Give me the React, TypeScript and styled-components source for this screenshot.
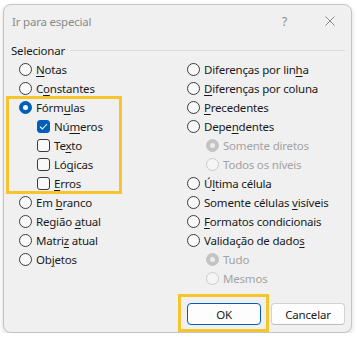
import React from 'react';
import styled, { createGlobalStyle } from 'styled-components';

const Global = createGlobalStyle`
  html, body { margin: 0; padding: 0; background: #ffffff; }
  body {
    font-family: "Noto Sans", "Segoe UI", sans-serif;
    font-size: 11.5px;
    letter-spacing: -0.2px;
    color: #1a1a1a;
  }
`;

const Dialog = styled.div`
  box-sizing: border-box;
  margin: 4px 0 0 3px;
  width: 349px;
  height: 329px;
  background: #f0f0f0;
  border: 1px solid #c4c4c4;
  border-radius: 8px;
  box-shadow: 0 2px 5px rgba(0, 0, 0, 0.16);
  display: flex;
  flex-direction: column;
`;

const TitleBar = styled.div`
  height: 32px;
  display: flex;
  align-items: center;
  padding: 0 16px 0 8px;
`;

const Title = styled.div`
  flex: 1;
  color: #8a8a8a;
  font-size: 11.5px;
`;

const Help = styled.span`
  color: #8a8a8a;
  font-size: 12px;
  margin-right: 38px;
`;

const Content = styled.div`
  padding: 4px 6px 0 7px;
`;

const GroupHeader = styled.div`
  height: 19px;
  display: flex;
  align-items: center;
  gap: 5px;
  &::after {
    content: "";
    flex: 1;
    height: 1px;
    background: #dcdcdc;
  }
`;

const Columns = styled.div`
  display: grid;
  grid-template-columns: 168px 1fr;
  margin-left: 8px;
`;

const Column = styled.div`
  display: flex;
  flex-direction: column;
`;

const Row = styled.label<{ $indent?: number; $disabled?: boolean }>`
  height: 19px;
  display: flex;
  align-items: center;
  gap: 4px;
  padding-left: ${(p) => p.$indent ?? 0}px;
  color: ${(p) => (p.$disabled ? '#a3a3a3' : '#1a1a1a')};
  white-space: nowrap;
  u { text-decoration-thickness: 1px; text-underline-offset: 2px; }
`;

const Radio = styled.span<{ $checked?: boolean; $disabled?: boolean }>`
  box-sizing: border-box;
  width: 13px;
  height: 13px;
  flex: none;
  border-radius: 50%;
  display: flex;
  align-items: center;
  justify-content: center;
  border: 1px solid
    ${(p) => (p.$checked ? (p.$disabled ? '#c3c3c3' : '#005fb8') : p.$disabled ? '#cbcbcb' : '#3a3a3a')};
  background: ${(p) =>
    p.$checked ? (p.$disabled ? '#c3c3c3' : '#005fb8') : p.$disabled ? '#f5f5f5' : '#f9f9f9'};
  &::after {
    content: "";
    display: ${(p) => (p.$checked ? 'block' : 'none')};
    width: 5px;
    height: 5px;
    border-radius: 50%;
    background: ${(p) => (p.$disabled ? '#ececec' : '#ffffff')};
  }
`;

const Check = styled.span<{ $checked?: boolean }>`
  box-sizing: border-box;
  width: 13px;
  height: 13px;
  flex: none;
  border-radius: 3px;
  display: flex;
  align-items: center;
  justify-content: center;
  border: 1px solid ${(p) => (p.$checked ? '#005fb8' : '#3a3a3a')};
  background: ${(p) => (p.$checked ? '#005fb8' : '#f9f9f9')};
`;

const Highlighted = styled.div`
  position: relative;
  display: flex;
  flex-direction: column;
`;

const Marker = styled.span<{ $inset: string }>`
  position: absolute;
  inset: ${(p) => p.$inset};
  border: 3px solid #f6c42b;
  pointer-events: none;
`;

const Footer = styled.div`
  margin-top: auto;
  display: flex;
  justify-content: flex-end;
  gap: 10px;
  padding: 0 6px 7px 0;
`;

const ButtonWrap = styled.div`
  position: relative;
  display: flex;
`;

const Button = styled.button<{ $primary?: boolean }>`
  box-sizing: border-box;
  width: 74px;
  height: 22px;
  padding: 0;
  font: inherit;
  letter-spacing: inherit;
  color: #1a1a1a;
  background: #fdfdfd;
  border: 1px solid ${(p) => (p.$primary ? '#005fb8' : '#d2d2d2')};
  border-bottom-color: ${(p) => (p.$primary ? '#005fb8' : '#bdbdbd')};
  border-radius: 4px;
`;

const CheckMark = () => (
  <svg width="9" height="7" viewBox="0 0 9 7">
    <path d="M1 3.6 L3.4 6 L8 1" fill="none" stroke="#fff" strokeWidth="1.1" />
  </svg>
);

const CloseIcon = () => (
  <svg width="10" height="10" viewBox="0 0 10 10">
    <path d="M0.5 0.5 L9.5 9.5 M9.5 0.5 L0.5 9.5" stroke="#8a8a8a" strokeWidth="1" />
  </svg>
);

type Opt = { pre: string; mk?: string; post?: string; checked?: boolean; disabled?: boolean };

const Label = ({ o }: { o: Opt }) => (
  <span>
    {o.pre}
    {o.mk ? <u>{o.mk}</u> : null}
    {o.post}
  </span>
);

const RadioRow = ({ o, indent }: { o: Opt; indent?: number }) => (
  <Row $indent={indent} $disabled={o.disabled}>
    <Radio $checked={o.checked} $disabled={o.disabled} />
    <Label o={o} />
  </Row>
);

const CheckRow = ({ o }: { o: Opt }) => (
  <Row $indent={18}>
    <Check $checked={o.checked}>{o.checked ? <CheckMark /> : null}</Check>
    <Label o={o} />
  </Row>
);

export default function App() {
  return (
    <>
      <Global />
      <Dialog>
        <TitleBar>
          <Title>Ir para especial</Title>
          <Help>?</Help>
          <CloseIcon />
        </TitleBar>
        <Content>
          <GroupHeader>Selecionar</GroupHeader>
          <Columns>
            <Column>
              <RadioRow o={{ pre: '', mk: 'N', post: 'otas' }} />
              <RadioRow o={{ pre: 'C', mk: 'o', post: 'nstantes' }} />
              <Highlighted>
                <Marker $inset="-2px 65px -1px -13px" />
                <RadioRow o={{ pre: 'Fórm', mk: 'u', post: 'las', checked: true }} />
                <CheckRow o={{ pre: 'Nú', mk: 'm', post: 'eros', checked: true }} />
                <CheckRow o={{ pre: 'Te', mk: 'x', post: 'to' }} />
                <CheckRow o={{ pre: 'Ló', mk: 'g', post: 'icas' }} />
                <CheckRow o={{ pre: '', mk: 'E', post: 'rros' }} />
              </Highlighted>
              <RadioRow o={{ pre: 'Em ', mk: 'b', post: 'ranco' }} />
              <RadioRow o={{ pre: 'Região ', mk: 'a', post: 'tual' }} />
              <RadioRow o={{ pre: 'Matri', mk: 'z', post: ' atual' }} />
              <RadioRow o={{ pre: 'Ob', mk: 'j', post: 'etos' }} />
            </Column>
            <Column>
              <RadioRow o={{ pre: 'Diferenças por lin', mk: 'h', post: 'a' }} />
              <RadioRow o={{ pre: '', mk: 'D', post: 'iferenças por coluna' }} />
              <RadioRow o={{ pre: '', mk: 'P', post: 'recedentes' }} />
              <RadioRow o={{ pre: 'Depe', mk: 'n', post: 'dentes' }} />
              <RadioRow indent={19} o={{ pre: 'Somente diretos', checked: true, disabled: true }} />
              <RadioRow indent={19} o={{ pre: 'Todos os níveis', disabled: true }} />
              <RadioRow o={{ pre: 'Ú', mk: 'l', post: 'tima célula' }} />
              <RadioRow o={{ pre: 'Somente células ', mk: 'v', post: 'isíveis' }} />
              <RadioRow o={{ pre: '', mk: 'F', post: 'ormatos condicionais' }} />
              <RadioRow o={{ pre: 'Validação de dado', mk: 's' }} />
              <RadioRow indent={19} o={{ pre: 'Tudo', checked: true, disabled: true }} />
              <RadioRow indent={19} o={{ pre: 'Mesmos', disabled: true }} />
            </Column>
          </Columns>
        </Content>
        <Footer>
          <ButtonWrap>
            <Marker $inset="-9px -8px -7px -9px" />
            <Button $primary>OK</Button>
          </ButtonWrap>
          <Button>Cancelar</Button>
        </Footer>
      </Dialog>
    </>
  );
}
